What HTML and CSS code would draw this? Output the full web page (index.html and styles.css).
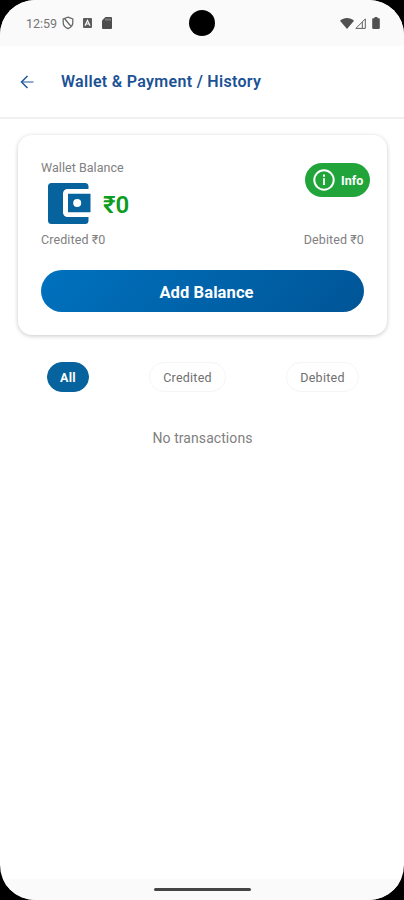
FILE: index.html
```html
<!DOCTYPE html>
<html lang="en">
<head>
<meta charset="utf-8">
<title>Wallet &amp; Payment</title>
<link rel="stylesheet" href="styles.css">
</head>
<body>
<div class="screen">
  <header class="status">
    <span class="clock">12:59</span>
    <svg class="st-shield" width="12" height="14" viewBox="0 0 12 14" fill="none" stroke="#6a6a6a" stroke-width="1.300"><path d="M6 1.200 10.800 3v3.600c0 3-2 5-4.800 6.100C3.200 11.600 1.200 9.600 1.200 6.600V3zM2.500 2.500l7 8.500"/></svg>
    <svg class="st-a" width="9" height="10" viewBox="0 0 9 10"><rect width="9" height="10" rx="1" fill="#5c5c5c"/><path d="M2 7.800 4.500 2.500 7 7.800M3 6h3" fill="none" stroke="#fafafa" stroke-width="1.200"/></svg>
    <svg class="st-sd" width="10" height="12" viewBox="0 0 10 12"><path d="M3.500 0H9a1 1 0 0 1 1 1v10a1 1 0 0 1-1 1H1a1 1 0 0 1-1-1V3.500z" fill="#4d4d4d"/><path d="M4 1.500v2.200M6 1.500v2.200M8 1.500v2.200" stroke="#bbb" stroke-width=".8"/></svg>
    <span class="camera"></span>
    <svg class="st-wifi" width="14" height="11" viewBox="0 0 14 11"><path d="M0 2.800C4-.8 10-.8 14 2.800L7 11z" fill="#505050"/></svg>
    <svg class="st-cell" width="11" height="11" viewBox="0 0 11 11"><path d="M.9 10.400 10.300.9v9.500zM7.300 4v6.400" fill="none" stroke="#606060"/></svg>
    <svg class="st-batt" width="8" height="12" viewBox="0 0 8 12"><path d="M2.500 0h3v1.300H7a.8.8 0 0 1 .8.800v9a.8.8 0 0 1-.8.800H1a.8.8 0 0 1-.8-.8v-9A.8.8 0 0 1 1 1.300h1.500z" fill="#505050"/></svg>
  </header>

  <nav class="bar">
    <svg width="14" height="14" viewBox="0 0 14 14" fill="none" stroke-width="1.500"><path d="M2 7h11.500" stroke="#6d8fb8"/><path d="M7.500 1 1.500 7 7.500 13" stroke="#1a5a9c"/></svg>
    <h1>Wallet &amp; Payment / History</h1>
  </nav>

  <main>
    <section class="card">
      <div class="top">
        <div>
          <div class="label">Wallet Balance</div>
          <div class="balance">
            <svg width="43" height="41" viewBox="0 0 43 41"><path d="M3.500 0H37a3.500 3.500 0 0 1 3.500 3.500V6H19.500A4.500 4.500 0 0 0 15 10.500v19a4.500 4.500 0 0 0 4.500 4.500h21v3.500A3.500 3.500 0 0 1 37 41H3.500A3.500 3.500 0 0 1 0 37.500v-34A3.500 3.500 0 0 1 3.500 0z" fill="#07639d"/><path d="M20 10.700h22.500v18.600H20z" fill="#07639d"/><circle cx="29.200" cy="20" r="4" fill="#fff"/></svg>
            <span class="amount">₹0</span>
          </div>
        </div>
        <button class="info">
          <svg width="22" height="22" viewBox="0 0 22 22" fill="none" stroke="#fff"><circle cx="11" cy="11" r="9.700" stroke-width="2"/><path d="M11 9.300v6.700M11 5.500v2.200" stroke-width="1.900"/></svg>
          <span>Info</span>
        </button>
      </div>
      <div class="totals"><span>Credited ₹0</span><span>Debited ₹0</span></div>
      <button class="add">Add Balance</button>
    </section>

    <div class="tabs">
      <button class="tab all">All</button>
      <button class="tab credited">Credited</button>
      <button class="tab debited">Debited</button>
    </div>
    <p class="empty">No transactions</p>
  </main>

  <footer class="gesture"><span></span></footer>
</div>
</body>
</html>
```
FILE: styles.css
```css
* { box-sizing: border-box; }
html, body { margin: 0; background: #000; }
body { font-family: Roboto, "Noto Sans", sans-serif; color: #808080; }
button { border: 0; margin: 0; padding: 0; font: inherit; white-space: nowrap; }
svg { display: block; flex: none; }

.screen {
  width: 404px;
  height: 900px;
  display: flex;
  flex-direction: column;
  background: #fff;
  border-radius: 35px;
  overflow: hidden;
}

.status {
  height: 46px;
  flex: none;
  display: flex;
  align-items: center;
  padding-left: 26px;
  background: #fafafa;
}
.clock { width: 36px; font-size: 12.5px; color: #757575; }
.st-a { margin-left: 9px; }
.st-sd { margin-left: 10px; }
.camera { width: 26px; height: 26px; margin-left: 77px; border-radius: 50%; background: #000; }
.st-wifi { margin-left: 125px; }
.st-cell { margin-left: 1px; }
.st-batt { margin-left: 6px; }

.bar {
  height: 73px;
  flex: none;
  display: flex;
  align-items: center;
  gap: 27px;
  padding: 0 20px;
  border-bottom: 2px solid #f0f0f0;
}
.bar h1 {
  margin: 0;
  font-size: 16px;
  line-height: 20px;
  font-weight: 600;
  color: #1c5294;
  letter-spacing: .31px;
  white-space: nowrap;
}

main { flex: 1; padding: 16px 17px 0 18px; }
.card {
  height: 200px;
  padding: 24px 23px 0;
  border-radius: 14px;
  background: #fff;
  box-shadow: 0 1px 4px rgba(0, 0, 0, .22);
}
.top { display: flex; justify-content: space-between; height: 73px; margin-right: -6px; }
.label { font-size: 12.5px; line-height: 17px; letter-spacing: .05px; }
.balance { display: flex; align-items: center; gap: 12px; padding: 7px 0 0 7px; }
.amount { font-size: 24px; line-height: 28px; font-weight: 600; color: #0b9c20; padding-top: 2px; }
.info {
  width: 65px;
  height: 34px;
  margin-top: 4px;
  display: flex;
  align-items: center;
  gap: 6px;
  padding: 0 0 0 8px;
  border-radius: 17px;
  background: #21a53b;
  color: #fff;
  font-size: 12.5px;
  font-weight: 700;
}
.totals {
  display: flex;
  justify-content: space-between;
  font-size: 12.5px;
  line-height: 16px;
  letter-spacing: .1px;
}
.add {
  display: block;
  width: 100%;
  height: 42px;
  margin-top: 22px;
  padding: 2px 0 0 8px;
  border-radius: 21px;
  background: linear-gradient(135deg, #0072bf, #005596);
  color: #fff;
  font-size: 16.5px;
  font-weight: 700;
  letter-spacing: .1px;
}

.tabs { display: flex; margin-top: 27px; padding-left: 29px; }
.tab {
  height: 30px;
  border: 1px solid #f5f5f5;
  border-radius: 15px;
  background: #fff;
  color: #707070;
  font-size: 12.5px;
  letter-spacing: .25px;
}
.tab.all { width: 42px; border-color: #07639d; background: #07639d; color: #fff; font-weight: 700; }
.tab.credited { width: 77px; margin-left: 60px; }
.tab.debited { width: 73px; margin-left: 60px; }
.empty { margin: 37px 0 0; font-size: 14px; line-height: 18px; letter-spacing: .07px; text-align: center; color: #808080; }

.gesture { height: 21px; flex: none; background: #fafafa; display: flex; justify-content: center; padding-top: 9px; }
.gesture span { width: 97px; height: 3px; border-radius: 2px; background: #444; }
```
